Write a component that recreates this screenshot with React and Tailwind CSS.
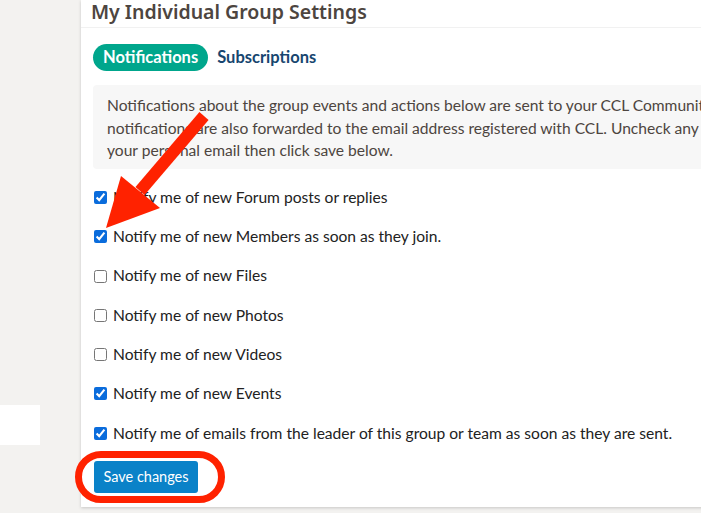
import { useState } from 'react';

const OPTIONS = [
  { label: 'Notify me of new Forum posts or replies', checked: true },
  { label: 'Notify me of new Members as soon as they join.', checked: true },
  { label: 'Notify me of new Files', checked: false },
  { label: 'Notify me of new Photos', checked: false },
  { label: 'Notify me of new Videos', checked: false },
  { label: 'Notify me of new Events', checked: true },
  { label: 'Notify me of emails from the leader of this group or team as soon as they are sent.', checked: true },
];

export default function App() {
  const [opts, setOpts] = useState(OPTIONS.map((o) => o.checked));

  return (
    <div className="relative h-[513px] w-[701px] overflow-hidden bg-[#f3f2f0] font-['Lato',sans-serif]">
      <div className="flex h-full">
        {/* left column */}
        <div className="w-[81px] shrink-0 pt-[405px]">
          <div className="h-[40px] w-[40px] bg-white" />
        </div>

        {/* settings panel */}
        <section className="mb-[6px] flex-1 bg-white shadow-[0_1px_3px_rgba(0,0,0,0.18)]">
          <div className="h-[28px] border-b border-[#f1f1f1] pl-[10px]">
            <h2 className="font-['Noto_Sans',sans-serif] text-[19.5px] leading-[24px] font-semibold text-[#4d4540]">
              My Individual Group Settings
            </h2>
          </div>

          <div className="pl-[12px]">
            <div className="mt-[16px] flex items-center gap-[9px]">
              <button className="h-[27px] rounded-full bg-[#00a68c] px-[10px] text-[16.5px] font-bold text-white">
                Notifications
              </button>
              <button className="text-[16.5px] font-bold text-[#17466f]">Subscriptions</button>
            </div>

            <div className="mt-[14px] h-[84px] overflow-hidden whitespace-nowrap rounded-l-[4px] bg-[#f7f7f7] py-[9px] pl-[14px] text-[15.6px] leading-[22.5px] text-[#4d4540]">
              <p>Notifications about the group events and actions below are sent to your CCL Community inbox.</p>
              <p>notifications are also forwarded to the email address registered with CCL. Uncheck any you do not want</p>
              <p>your personal email then click save below.</p>
            </div>

            <ul className="mt-[18px] flex flex-col gap-[18.3px]">
              {OPTIONS.map((o, i) => (
                <li key={o.label}>
                  <label className="flex h-[21px] items-center gap-[6px] text-[15.6px] text-[#222]">
                    <input
                      type="checkbox"
                      checked={opts[i]}
                      onChange={() => setOpts(opts.map((v, j) => (j === i ? !v : v)))}
                      className="ml-[1px] h-[13px] w-[13px] accent-[#0a6cdc]"
                    />
                    {o.label}
                  </label>
                </li>
              ))}
            </ul>

            <button className="ml-[1px] mt-[17px] h-[32px] w-[104px] rounded-[3px] bg-[#0a82c8] text-[14.5px] text-white">
              Save changes
            </button>
          </div>
        </section>
      </div>

      {/* annotation overlay */}
      <svg className="pointer-events-none absolute inset-0" width="701" height="513" viewBox="0 0 701 513">
        <line x1="204" y1="116" x2="140" y2="191" stroke="#ff2200" strokeWidth="12" />
        <polygon points="121,176 160,208 106,228" fill="#ff2200" />
        <rect x="78.5" y="454.5" width="143" height="45" rx="22.5" fill="none" stroke="#ff2200" strokeWidth="7" />
      </svg>
    </div>
  );
}
